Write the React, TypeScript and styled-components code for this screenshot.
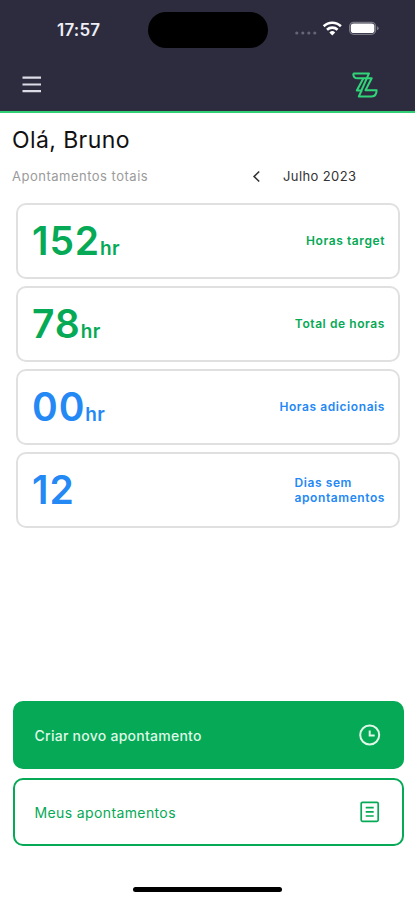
import React from 'react';
import styled, { createGlobalStyle } from 'styled-components';

const GREEN = '#06a955';
const BLUE = '#2488f5';

const GlobalStyle = createGlobalStyle`
  * { box-sizing: border-box; }
  body { margin: 0; background: #fff; font-family: Inter, "Liberation Sans", sans-serif; }
  button { font: inherit; cursor: pointer; }
`;

const Screen = styled.div`
  width: 415px;
  height: 900px;
  display: flex;
  flex-direction: column;
  background: #fff;
  overflow: hidden;
`;

const Header = styled.header`
  height: 113px;
  flex: none;
  background: #2c2c3e;
  border-bottom: 2px solid #31cf75;
`;

const StatusBar = styled.div`
  height: 59px;
  display: grid;
  grid-template-columns: 148px 120px 1fr;
  align-items: center;
`;

const Time = styled.span`
  padding-left: 57px;
  font-size: 17px;
  line-height: 20px;
  font-weight: 600;
  letter-spacing: 0.2px;
  color: #eeeef6;
`;

const Island = styled.div`
  height: 36px;
  border-radius: 18px;
  background: #000;
`;

const StatusIcons = styled.div`
  display: flex;
  align-items: center;
  padding: 0 0 1px 26px;
`;

const NavBar = styled.div`
  height: 52px;
  display: flex;
  align-items: center;
  justify-content: space-between;
  padding: 0 37px 0 22px;
`;

const IconButton = styled.button`
  display: flex;
  padding: 0;
  border: 0;
  background: none;
`;

const Greeting = styled.h1`
  margin: 12px 0 0 12px;
  font-size: 23px;
  line-height: 30px;
  font-weight: 400;
  letter-spacing: 0.4px;
  color: #111;
`;

const Period = styled.div`
  display: flex;
  align-items: center;
  height: 20px;
  margin: 11px 0 17px 12px;
`;

const Subtitle = styled.span`
  width: 240px;
  font-size: 13px;
  letter-spacing: 0.5px;
  color: #9b9b9b;
`;

const Month = styled.span`
  margin-left: 22px;
  font-size: 13px;
  letter-spacing: 0.4px;
  color: #333;
`;

const Cards = styled.section`
  display: flex;
  flex-direction: column;
  gap: 7px;
  padding: 0 15px 0 16px;
`;

const Card = styled.article<{ $color: string }>`
  height: 76px;
  display: flex;
  align-items: center;
  justify-content: space-between;
  padding: 0 13px 0 14px;
  border: 2px solid #e0e0e0;
  border-radius: 10px;
  color: ${({ $color }) => $color};
`;

const Amount = styled.div`
  display: flex;
  align-items: baseline;
  font-size: 39px;
  line-height: 46px;
  font-weight: 600;
  letter-spacing: 0.9px;
`;

const Unit = styled.span`
  font-size: 19px;
  line-height: 20px;
  letter-spacing: 0.4px;
`;

const CardLabel = styled.span`
  font-size: 12px;
  line-height: 15.5px;
  font-weight: 600;
  letter-spacing: 0.58px;
  white-space: pre-line;
`;

const Actions = styled.div`
  display: flex;
  flex-direction: column;
  gap: 9px;
  margin: auto 11.5px 0 12.5px;
`;

const Action = styled.button<{ $filled?: boolean }>`
  height: 68px;
  display: flex;
  align-items: center;
  justify-content: space-between;
  padding: 0 20px;
  border: 2px solid ${GREEN};
  border-radius: 10px;
  background: ${({ $filled }) => ($filled ? GREEN : '#fff')};
  color: ${({ $filled }) => ($filled ? '#dff8e8' : GREEN)};
  font-size: 14px;
  font-weight: ${({ $filled }) => ($filled ? 500 : 400)};
  letter-spacing: ${({ $filled }) => ($filled ? '0.26px' : '0.38px')};
`;

const HomeIndicator = styled.div`
  flex: none;
  width: 149px;
  height: 5px;
  margin: 41px auto 8px;
  border-radius: 3px;
  background: #000;
`;

const metrics = [
  { value: '152', unit: 'hr', label: 'Horas target', color: GREEN },
  { value: '78', unit: 'hr', label: 'Total de horas', color: GREEN },
  { value: '00', unit: 'hr', label: 'Horas adicionais', color: BLUE },
  { value: '12', unit: '', label: 'Dias sem\napontamentos', color: BLUE },
];

const SignalWifiBattery = () => (
  <svg width="88" height="20" viewBox="0 0 88 20" fill="none">
    <g fill="#656575">
      <circle cx="2.8" cy="14" r="1.6" />
      <circle cx="8.8" cy="14" r="1.6" />
      <circle cx="14.8" cy="14" r="1.6" />
      <circle cx="20.8" cy="14" r="1.6" />
    </g>
    <g stroke="#fff" strokeWidth="2.6">
      <path d="M29.7 7.3a12.3 12.3 0 0 1 17.2 0" />
      <path d="M33 10.7a7.7 7.7 0 0 1 10.6 0" />
    </g>
    <path d="M35.4 13.5a4.2 4.2 0 0 1 5.8 0l-2.9 3z" fill="#fff" />
    <rect x="55.6" y="3.3" width="26" height="12" rx="4" stroke="#777785" strokeWidth="1.2" />
    <rect x="56.8" y="4.5" width="23.6" height="9.6" rx="2.8" fill="#fff" />
    <path d="M83 7.3v4q1.7-.7 1.7-2t-1.7-2z" fill="#777785" />
  </svg>
);

const MenuIcon = () => (
  <svg width="20" height="20" viewBox="0 0 20 20" stroke="#dcdce6" strokeWidth="2.2">
    <path d="M.5 2.7h18.5M.5 9.5h18.5M.5 16.2h18.5" />
  </svg>
);

const Logo = () => (
  <svg width="26" height="28" viewBox="0 0 26 28" fill="none" stroke="#30d579" strokeWidth="2" strokeLinejoin="round">
    <path d="M1.2 2.4H17l-7.6 17.1H4.8l6.6-12.2" />
    <path d="M1.2 2.4c0 3 1.8 4.9 4.6 4.9h13.9l-6.2 12h11.1c0 3.8-1.6 6.1-4.9 6.1H6.8l2.8-5.9" />
  </svg>
);

const ChevronLeft = () => (
  <svg width="9" height="13" viewBox="0 0 9 13" fill="none" stroke="#333" strokeWidth="1.6">
    <path d="M7.2 1.5 2.1 6.5l5.1 5" />
  </svg>
);

const ClockIcon = () => (
  <svg width="24" height="24" viewBox="0 0 24 24" fill="none" stroke="#dff8e8" strokeWidth="2">
    <circle cx="11.7" cy="12" r="9.5" />
    <path d="M11.7 7.5v5h5" />
  </svg>
);

const ListIcon = () => (
  <svg width="24" height="24" viewBox="0 0 24 24" fill="none" stroke={GREEN}>
    <rect x="3.2" y="2.3" width="17" height="19" rx="1.3" strokeWidth="1.7" />
    <path d="M7.7 7.6h8M7.7 11.8h8M7.7 16h8" strokeWidth="1.7" />
  </svg>
);

export default function App() {
  return (
    <Screen>
      <GlobalStyle />
      <Header>
        <StatusBar>
          <Time>17:57</Time>
          <Island />
          <StatusIcons><SignalWifiBattery /></StatusIcons>
        </StatusBar>
        <NavBar>
          <IconButton aria-label="Menu"><MenuIcon /></IconButton>
          <Logo />
        </NavBar>
      </Header>
      <Greeting>Olá, Bruno</Greeting>
      <Period>
        <Subtitle>Apontamentos totais</Subtitle>
        <IconButton aria-label="Mês anterior"><ChevronLeft /></IconButton>
        <Month>Julho 2023</Month>
      </Period>
      <Cards>
        {metrics.map(({ value, unit, label, color }) => (
          <Card key={label} $color={color}>
            <Amount>{value}{unit && <Unit>{unit}</Unit>}</Amount>
            <CardLabel>{label}</CardLabel>
          </Card>
        ))}
      </Cards>
      <Actions>
        <Action $filled>Criar novo apontamento<ClockIcon /></Action>
        <Action>Meus apontamentos<ListIcon /></Action>
      </Actions>
      <HomeIndicator />
    </Screen>
  );
}
